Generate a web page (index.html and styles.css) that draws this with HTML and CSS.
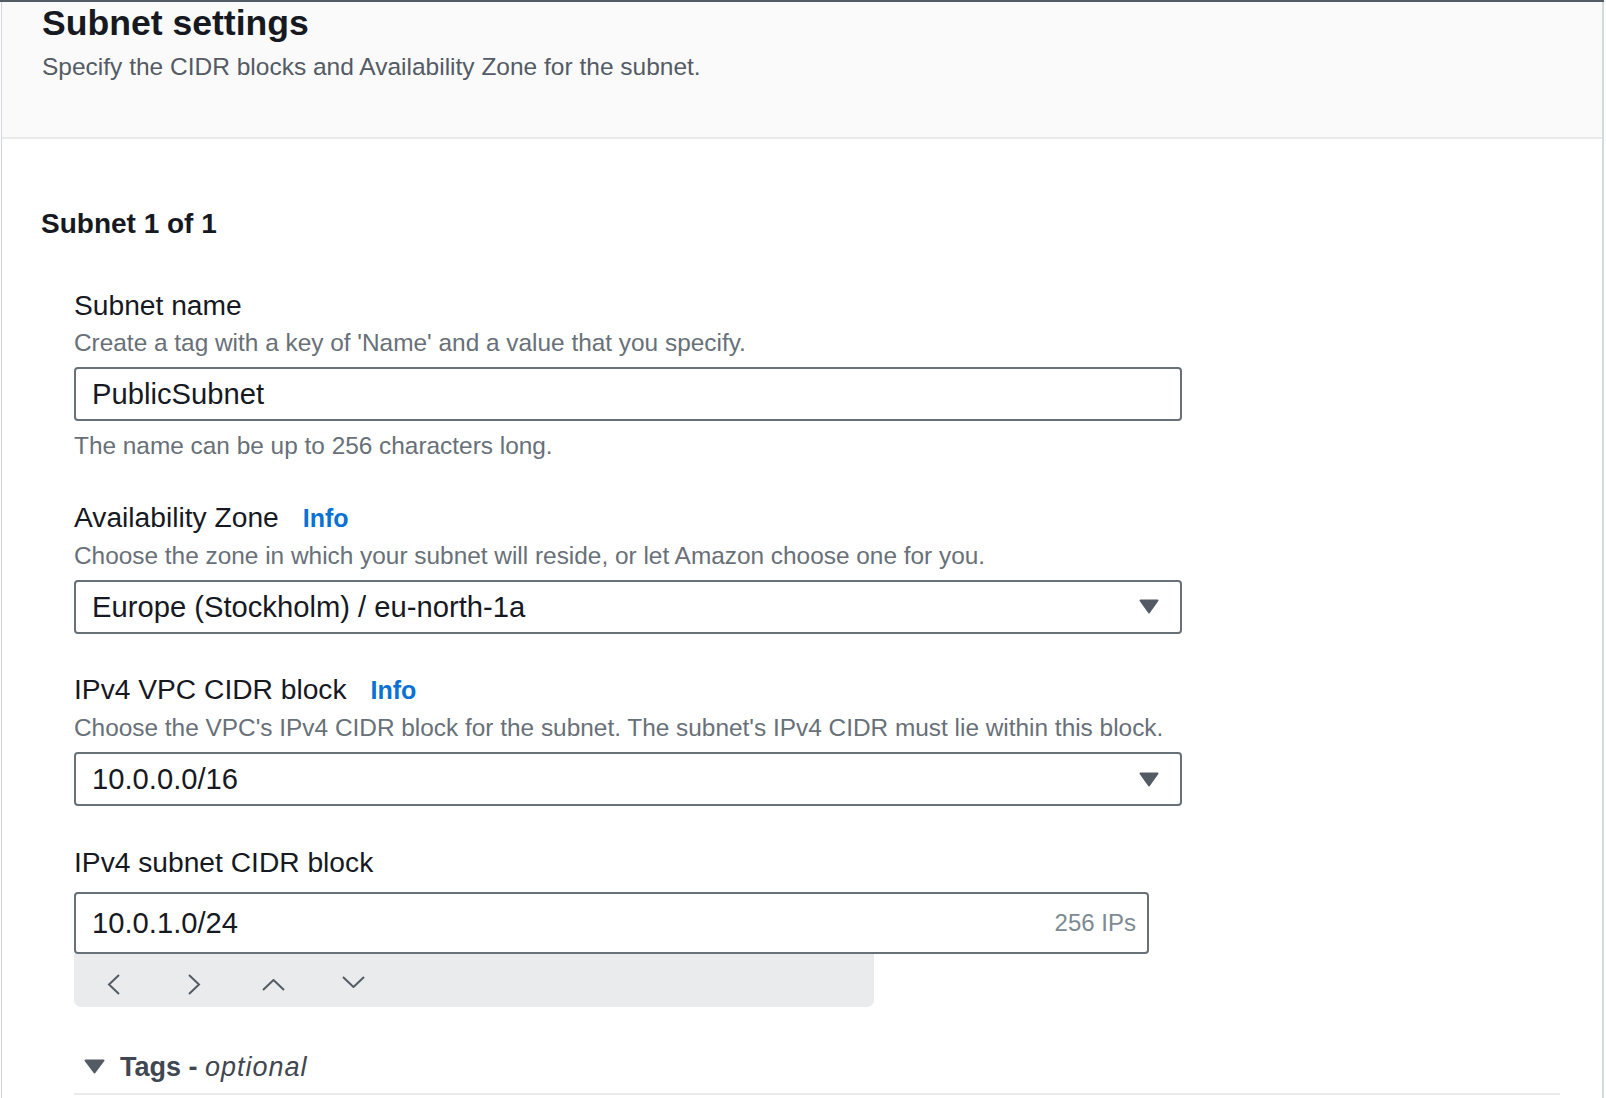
FILE: index.html
```html
<!DOCTYPE html>
<html lang="en">
<head>
<meta charset="utf-8">
<title>Subnet settings</title>
<link rel="stylesheet" href="styles.css">
</head>
<body>
<div class="topline"></div>
<div class="panel">
  <header class="panel-head">
    <h2 class="panel-title">Subnet settings</h2>
    <p class="panel-sub">Specify the CIDR blocks and Availability Zone for the subnet.</p>
  </header>
  <section class="panel-body">
    <h3 class="subnet-title">Subnet 1 of 1</h3>
    <div class="fields">
      <div class="field field-first">
        <div class="label">Subnet name</div>
        <div class="desc">Create a tag with a key of 'Name' and a value that you specify.</div>
        <div class="input">PublicSubnet</div>
        <div class="hint">The name can be up to 256 characters long.</div>
      </div>

      <div class="field">
        <div class="label">Availability Zone<a class="info">Info</a></div>
        <div class="desc">Choose the zone in which your subnet will reside, or let Amazon choose one for you.</div>
        <div class="input select">
          <span>Europe (Stockholm) / eu-north-1a</span>
          <svg class="caret" width="20" height="15" viewBox="0 0 20 15"><path d="M1.5 1.5 H18.5 L10 13.5 Z" fill="#545b64" stroke="#545b64" stroke-width="2" stroke-linejoin="round"/></svg>
        </div>
      </div>

      <div class="field">
        <div class="label">IPv4 VPC CIDR block<a class="info">Info</a></div>
        <div class="desc">Choose the VPC's IPv4 CIDR block for the subnet. The subnet's IPv4 CIDR must lie within this block.</div>
        <div class="input select">
          <span>10.0.0.0/16</span>
          <svg class="caret" width="20" height="15" viewBox="0 0 20 15"><path d="M1.5 1.5 H18.5 L10 13.5 Z" fill="#545b64" stroke="#545b64" stroke-width="2" stroke-linejoin="round"/></svg>
        </div>
      </div>

      <div class="field">
        <div class="label">IPv4 subnet CIDR block</div>
        <div class="input cidr">
          <span>10.0.1.0/24</span>
          <span class="ips">256 IPs</span>
        </div>
        <div class="toolbar">
          <svg class="tb tb-left" width="14" height="21" viewBox="0 0 14 21"><polyline points="12,1 2,10.5 12,20" fill="none" stroke="#545b64" stroke-width="2"/></svg>
          <svg class="tb tb-right" width="14" height="21" viewBox="0 0 14 21"><polyline points="2,1 12,10.5 2,20" fill="none" stroke="#545b64" stroke-width="2"/></svg>
          <svg class="tb tb-up" width="23" height="12" viewBox="0 0 23 12"><polyline points="1,11 11.5,1 22,11" fill="none" stroke="#545b64" stroke-width="2"/></svg>
          <svg class="tb tb-down" width="23" height="12" viewBox="0 0 23 12"><polyline points="1,1 11.5,11 22,1" fill="none" stroke="#545b64" stroke-width="2"/></svg>
        </div>
      </div>

      <div class="tags">
        <svg class="tags-caret" width="21" height="15" viewBox="0 0 21 15"><path d="M1.5 1.5 H19.5 L10.5 13.5 Z" fill="#545b64" stroke="#545b64" stroke-width="2" stroke-linejoin="round"/></svg>
        <span class="tags-text"><b>Tags -</b> <i>optional</i></span>
      </div>
    </div>
  </section>
</div>
</body>
</html>
```
FILE: styles.css
```css
html, body {
  margin: 0;
  padding: 0;
  overflow: hidden;
  background: #ffffff;
}
body {
  font-family: "Liberation Sans", Arial, sans-serif;
  color: #16191f;
}
.topline {
  height: 2px;
  background: #545b64;
  margin-right: 2px;
}
.panel {
  margin-left: 1px;
  margin-right: 2px;
  border-left: 1px solid #d1d5db;
  border-right: 2px solid #d5dbdb;
  min-height: calc(100vh - 2px);
  box-sizing: border-box;
}
.panel-head {
  background: #fafafa;
  padding: 0 0 54px 40px;
  border-bottom: 2px solid #e9ebed;
}
.panel-title {
  margin: 0;
  font-size: 35.6px;
  line-height: 42px;
  font-weight: 700;
  color: #16191f;
}
.panel-sub {
  margin: 7px 0 0;
  font-size: 24.5px;
  line-height: 32px;
  color: #545b64;
}
.panel-body {
  padding: 68px 42px 0 39px;
}
.subnet-title {
  margin: 0;
  font-size: 28px;
  line-height: 34px;
  font-weight: 700;
  color: #16191f;
}
.fields {
  margin-left: 33px;
  display: flex;
  flex-direction: column;
}
.field {
  display: flex;
  flex-direction: column;
  margin-top: 37.5px;
}
.field-first {
  margin-top: 45.5px;
}
.label {
  font-size: 28.2px;
  line-height: 36px;
  color: #16191f;
  display: flex;
  align-items: baseline;
}
.info {
  margin-left: 24px;
  font-size: 25px;
  font-weight: 700;
  color: #0972d3;
}
.desc, .hint {
  font-size: 24.4px;
  line-height: 30px;
  color: #687078;
  margin-top: 5px;
  white-space: nowrap;
}
.hint {
  margin-top: 10.5px;
}
.input {
  box-sizing: border-box;
  width: 1108px;
  height: 54px;
  margin-top: 9px;
  border: 2px solid #687078;
  border-radius: 4px;
  padding: 0 21px 0 16px;
  font-size: 29.2px;
  line-height: 50px;
  color: #16191f;
  background: #fff;
  display: flex;
  align-items: center;
  justify-content: space-between;
}
.caret {
  flex: none;
}
.input.cidr {
  width: 1075px;
  height: 62px;
  line-height: 58px;
  margin-top: 12px;
  padding-right: 11px;
}
.ips {
  font-size: 24px;
  color: #7d8a92;
}
.toolbar {
  box-sizing: border-box;
  width: 800px;
  height: 53px;
  background: #e9ebed;
  border-radius: 0 0 7px 7px;
  display: flex;
  align-items: flex-start;
  padding-left: 33px;
}
.tb { flex: none; }
.tb-left { margin-top: 20px; }
.tb-right { margin-top: 20px; margin-left: 66px; }
.tb-up { margin-top: 25px; margin-left: 61px; }
.tb-down { margin-top: 22px; margin-left: 57px; }
.tags {
  margin-top: 43px;
  display: flex;
  align-items: center;
  height: 34px;
  padding: 0 0 9px 10px;
  border-bottom: 2px solid #e9ebed;
}
.tags-caret {
  flex: none;
  margin-right: 15px;
}
.tags-text {
  font-size: 27px;
  line-height: 34px;
  color: #414750;
}
.tags-text b { font-weight: 700; }
.tags-text i { font-style: italic; letter-spacing: 1px; }
```
